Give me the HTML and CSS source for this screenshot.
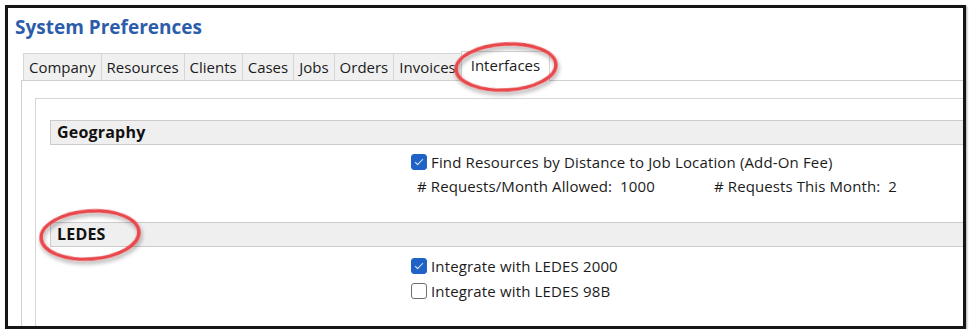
FILE: index.html
```html
<!DOCTYPE html>
<html lang="en">
<head>
  <title>System Preferences</title>
<link rel="stylesheet" href="styles.css">
</head>
<body>

  <div class="frame">
    <h1 class="title">System Preferences</h1>

    <div class="tabs">
      <span class="tab">Company</span>
      <span class="tab">Resources</span>
      <span class="tab">Clients</span>
      <span class="tab">Cases</span>
      <span class="tab">Jobs</span>
      <span class="tab">Orders</span>
      <span class="tab">Invoices</span>
      <span class="tab active">Interfaces</span>
    </div>

    <div class="panel">
      <div class="inner">

        <div class="section-head">Geography</div>
        <div class="options">
          <label class="check"><span class="box on"></span>Find Resources by Distance to Job Location (Add-On Fee)</label>
          <div class="counts">
            <span class="count"># Requests/Month Allowed:&nbsp; 1000</span>
            <span class="count"># Requests This Month:&nbsp; 2</span>
          </div>
        </div>

        <div class="section-head ledes">LEDES</div>
        <div class="options ledes-opts">
          <label class="check"><span class="box on"></span>Integrate with LEDES 2000</label>
          <label class="check"><span class="box"></span>Integrate with LEDES 98B</label>
        </div>

      </div>
    </div>
  </div>

  <!-- red callout rings drawn over the screenshot -->
  <svg class="marks" width="972" height="334" viewBox="0 0 972 334">
    <defs>
      <filter id="shade" x="-20%" y="-30%" width="140%" height="160%">
        <feDropShadow dx="1" dy="3" stdDeviation="2" flood-color="#000" flood-opacity="0.35"/>
      </filter>
    </defs>
    <ellipse cx="506" cy="67" rx="50" ry="23" transform="rotate(-3 506 67)" />
    <ellipse cx="90" cy="235" rx="49" ry="24" transform="rotate(-4 90 235)" />
  </svg>

</body>
</html>
```

FILE: styles.css
```css
html, body {
  background: #fff;
  color: #1b1b1b;
  font: 15px "Open Sans", "Noto Sans", sans-serif;
  margin: 0px;
  padding: 0px;
}
body { position: relative; }

.frame {
  margin: 5px 0 0 5px;
  width: 955px;
  height: 318px;
  border: 3px solid #151515;
  box-shadow: 1px 1px 2px rgba(0,0,0,0.35);
  overflow: hidden;
}

.title {
  margin: 0;
  padding: 6px 0 0 7px;
  font-size: 19px;
  line-height: 26px;
  font-weight: bold;
  color: #2b5dab;
}

.tabs {
  display: flex;
  align-items: flex-end;
  margin: 9px 0 0 15px;
  height: 31px;
}
.tab {
  background: #f0f0f0;
  border: 1px solid #d6d6d6;
  border-right: none;
  border-bottom: none;
  height: 26px;
  line-height: 26px;
  padding: 0 5px;
}
.tab.active {
  background: #fff;
  height: 29px;
  line-height: 27px;
  padding: 0 9px;
  border-right: 1px solid #d6d6d6;
  margin-bottom: -1px;
  position: relative;
}

.panel {
  margin-left: 13px;
  border-top: 1px solid #d0d0d0;
  border-left: 1px solid #d0d0d0;
  padding: 17px 0 0 13px;
  height: 240px;
}
.inner {
  border-top: 1px solid #d6d6d6;
  border-left: 1px solid #d6d6d6;
  padding: 21px 0 0 14px;
  height: 240px;
}

.section-head {
  background: #efefef;
  border: 1px solid #cbcbcb;
  border-right: none;
  height: 23px;
  line-height: 23px;
  padding-left: 6px;
  font-size: 16px;
  letter-spacing: 0.2px;
  font-weight: bold;
  color: #111;
}
.section-head.ledes { margin-top: 23px; }

.options {
  margin-left: 361px;
  padding-top: 4px;
}
.options.ledes-opts { padding-top: 6px; }
.check {
  display: flex;
  align-items: center;
  height: 25px;
  letter-spacing: 0.15px;
}
.box {
  width: 14px;
  height: 14px;
  border: 1.5px solid #6f6f6f;
  border-radius: 3px;
  margin-right: 4px;
  background: #fff;
  position: relative;
}
.box.on {
  background: #1f63c6;
  border-color: #1f63c6;
}
.box.on:after {
  content: "";
  position: absolute;
  left: 4.5px; top: 2px;
  width: 3px; height: 7px;
  border: solid #e8f0ff;
  border-width: 0 1.5px 1.5px 0;
  transform: rotate(45deg);
}
.counts {
  display: flex;
  height: 25px;
  line-height: 25px;
  padding-left: 6px;
  letter-spacing: 0.1px;
}
.count {
  width: 297px;
  flex-shrink: 0;
  white-space: nowrap;
}

.marks {
  position: absolute;
  left: 0; top: 0;
  pointer-events: none;
}
.marks ellipse {
  fill: none;
  stroke: #e8474c;
  stroke-width: 3.5;
  filter: url(#shade);
}
```
